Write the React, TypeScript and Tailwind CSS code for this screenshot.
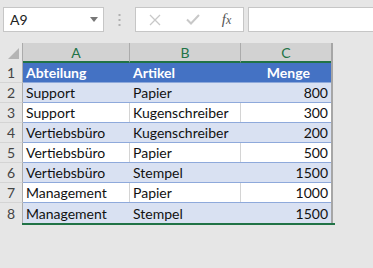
import React from "react";

const rows: [string, string, string][] = [
  ["Support", "Papier", "800"],
  ["Support", "Kugenschreiber", "300"],
  ["Vertiebsbüro", "Kugenschreiber", "200"],
  ["Vertiebsbüro", "Papier", "500"],
  ["Vertiebsbüro", "Stempel", "1500"],
  ["Management", "Papier", "1000"],
  ["Management", "Stempel", "1500"],
];

export default function App() {
  return (
    <div className="w-[373px] h-[268px] bg-[#e6e6e6] overflow-hidden text-[#222]" style={{ fontFamily: "Lato, 'Liberation Sans', sans-serif" }}>
      {/* formula bar */}
      <div className="flex items-center h-[43px] pb-[11px] pt-[7px]">
        <div className="ml-[3px] w-[101px] h-[25px] bg-white border border-[#c6c6c6] flex items-center justify-between pl-[6px] pr-[5px]">
          <span className="text-[14px] text-[#222]">A9</span>
          <svg width="8" height="5" viewBox="0 0 8 5"><path d="M0 0h8L4 5z" fill="#777" /></svg>
        </div>
        <div className="w-[31px] flex justify-center">
          <svg width="3" height="12" viewBox="0 0 3 12"><rect x="0.5" y="0" width="2" height="2" fill="#b0b0b0" /><rect x="0.5" y="5" width="2" height="2" fill="#b0b0b0" /><rect x="0.5" y="10" width="2" height="2" fill="#b0b0b0" /></svg>
        </div>
        <div className="w-[109px] h-[25px] bg-white border border-[#c6c6c6] flex items-center">
          <div className="w-[38px] flex justify-center">
            <svg width="12" height="12" viewBox="0 0 12 12"><path d="M1 1L11 11M11 1L1 11" stroke="#c8c8c8" strokeWidth="1.3" /></svg>
          </div>
          <div className="w-[38px] flex justify-center">
            <svg width="14" height="11" viewBox="0 0 14 11"><path d="M1 5.5L5 9.5L13 1" stroke="#c8c8c8" strokeWidth="2" fill="none" /></svg>
          </div>
          <div className="flex-1 flex justify-center pr-[2px]">
            <span className="text-[15px] italic text-[#555]" style={{ fontFamily: "'Liberation Serif', serif" }}>f<span className="text-[12px]">x</span></span>
          </div>
        </div>
        <div className="ml-[4px] flex-1 h-[25px] bg-white border border-[#c6c6c6] border-r-0" />
      </div>
      {/* grid */}
      <div className="flex">
        <div className="w-[333px] border-r-2 border-[#a6a6a6]">
          {/* column headers */}
          <div className="flex h-[20px] bg-[#d2d2d2]">
            <div className="w-[23px] bg-[#e6e6e6] border-r border-[#ababab] relative">
              <svg className="absolute right-[3px] bottom-[4px]" width="11" height="11" viewBox="0 0 11 11"><path d="M11 0V11H0z" fill="#b4b4b4" /></svg>
            </div>
            {["A", "B", "C"].map((c, i) => (
              <div key={c} className={`flex items-center justify-center text-[14px] text-[#217346] border-b-2 border-[#217346] ${i === 0 ? "w-[107px] border-r border-r-[#ababab]" : i === 1 ? "w-[111px] border-r border-r-[#ababab]" : "flex-1"}`}>
                {c}
              </div>
            ))}
          </div>
          {/* header row 1 */}
          <div className="flex h-[20px]">
            <div className="w-[23px] border-r border-[#ababab] border-b border-b-[#d4d4d4] flex items-center justify-center text-[14px] text-[#444]">1</div>
            <div className="flex-1 flex bg-[#4472c4] text-white font-bold text-[14px] border-b border-[#8ea9db]">
              <div className="w-[107px] pl-[3px] flex items-center">Abteilung</div>
              <div className="w-[111px] pl-[3px] flex items-center">Artikel</div>
              <div className="flex-1 pr-[21px] flex items-center justify-end">Menge</div>
            </div>
          </div>
          {rows.map((r, i) => {
            const band = i % 2 === 0;
            const last = i === rows.length - 1;
            return (
              <div key={i} className="flex h-[20px]">
                <div className={`w-[23px] border-r border-[#ababab] flex items-center justify-center text-[14px] text-[#444] ${last ? "" : "border-b border-b-[#d4d4d4]"}`}>{i + 2}</div>
                <div className={`flex-1 flex text-[14px] text-[#111] ${band ? "bg-[#d9e1f2]" : "bg-white"} ${last ? "" : "border-b border-[#8ea9db]"}`}>
                  <div className={`w-[107px] pl-[3px] flex items-center ${band ? "" : "border-r border-[#d4d4d4]"}`}>{r[0]}</div>
                  <div className={`w-[111px] pl-[3px] flex items-center ${band ? "" : "border-r border-[#d4d4d4]"}`}>{r[1]}</div>
                  <div className="flex-1 pr-[3px] flex items-center justify-end">{r[2]}</div>
                </div>
              </div>
            );
          })}
        </div>
      </div>
      <div className="ml-[22px] w-[313px] h-[2px] bg-[#217346]" />
    </div>
  );
}
